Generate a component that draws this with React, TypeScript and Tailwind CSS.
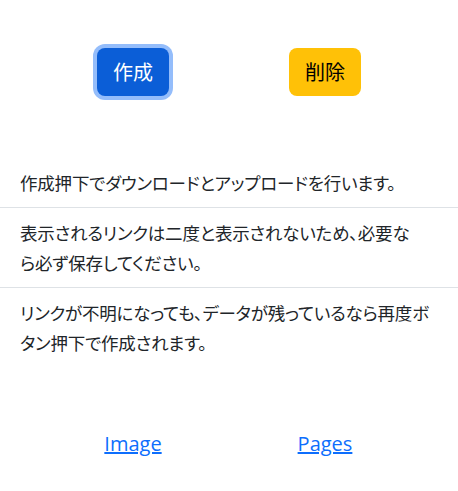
const JP = "font-['Noto_Sans_CJK_JP','Noto_Sans',sans-serif]";

const notes = [
  "作成押下でダウンロードとアップロードを行います。",
  "表示されるリンクは二度と表示されないため、必要な\nら必ず保存してください。",
  "リンクが不明になっても、データが残っているなら再度ボタン押下で作成されます。",
];

export default function App() {
  return (
    <div className={`w-[458px] h-[491px] bg-white text-[#212529] ${JP}`}>
      <div className="pt-[48px] mx-auto w-[384px] grid grid-cols-2 justify-items-center">
        <button
          type="button"
          className="h-[48px] px-4 rounded-lg bg-[#0b5ed7] text-white text-[20px] leading-[30px] shadow-[0_0_0_4px_#94bdfb]"
        >
          作成
        </button>
        <button
          type="button"
          className="h-[48px] px-4 rounded-lg bg-[#ffc107] text-black text-[20px] leading-[30px]"
        >
          削除
        </button>
      </div>

      <ul className="mt-[62px] text-[17.5px] leading-[30px] tracking-[-0.2px] [font-feature-settings:'palt']">
        {notes.map((n, i) => (
          <li
            key={i}
            className={`px-5 py-[9.5px] whitespace-pre-line ${i < notes.length - 1 ? "border-b border-[#dee2e6]" : ""}`}
          >
            {n}
          </li>
        ))}
      </ul>

      <div className="mt-[62px] mx-auto w-[384px] grid grid-cols-2 justify-items-center text-[20px] leading-[30px] font-['Open_Sans',sans-serif]">
        <a href="#" className="text-[#0d6efd] underline">Image</a>
        <a href="#" className="text-[#0d6efd] underline">Pages</a>
      </div>
    </div>
  );
}
